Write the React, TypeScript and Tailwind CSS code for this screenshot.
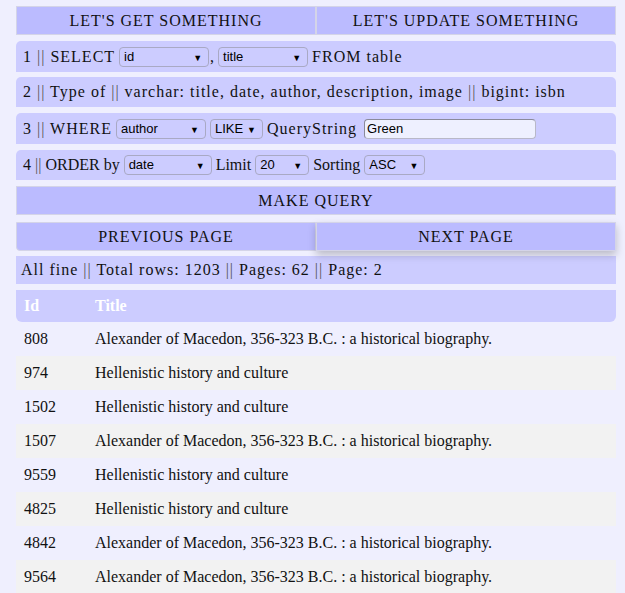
import React from "react";

const serif = "font-['Liberation_Serif','Times_New_Roman',serif]";
const sans = "font-['Liberation_Sans',Arial,sans-serif]";

const rows = [
    { id: 808, title: "Alexander of Macedon, 356-323 B.C. : a historical biography." },
    { id: 974, title: "Hellenistic history and culture" },
    { id: 1502, title: "Hellenistic history and culture" },
    { id: 1507, title: "Alexander of Macedon, 356-323 B.C. : a historical biography." },
    { id: 9559, title: "Hellenistic history and culture" },
    { id: 4825, title: "Hellenistic history and culture" },
    { id: 4842, title: "Alexander of Macedon, 356-323 B.C. : a historical biography." },
    { id: 9564, title: "Alexander of Macedon, 356-323 B.C. : a historical biography." },
];

// the pipes render thin and greyish in the original
const Sep = () => <span className="text-[#555]">||</span>;

const Select = ( { value, width }: { value: string; width: string } ) => (
    <span className={ `relative inline-flex items-center h-[20px] ${width} rounded-[4px] border border-[#a9a9c4] ${sans} text-[13px] tracking-normal text-black` }>
        <span className="pl-[4px]">{ value }</span>
        <span className="absolute right-[6px] top-[3px] text-[9px] leading-[14px]">▼</span>
    </span>
);

const Button = ( { label, extra = "" }: { label: string; extra?: string } ) => (
    <button className={ `flex-1 h-full bg-[#bbbbff] border border-[#d4d4e8] text-[16px] tracking-[1px] text-[#111] ${serif} ${extra}` }>
        { label }
    </button>
);

const Row = ( { children, h = "h-[30px]", extra = "" }: { children: React.ReactNode; h?: string; extra?: string } ) => (
    <div className={ `flex items-center gap-[4px] ${h} px-[7px] bg-[#ccccff] rounded-t-[5px] text-[16px] text-[#111] ${serif} ${extra}` }>
        { children }
    </div>
);

export default function App () {
    return (
        <div className="min-h-[593px] bg-[#efeffe] pt-[6px]">
            <div className="w-[600px] ml-[16px] flex flex-col">
                <div className="flex h-[29px]">
                    <Button label="LET'S GET SOMETHING" />
                    <Button label="LET'S UPDATE SOMETHING" />
                </div>

                <Row h="h-[31px]" extra="mt-[6px] tracking-[1px]">
                    <span>1 <Sep /> SELECT</span>
                    <Select value="id" width="w-[90px]" />
                    <span className="-ml-[3px] -mr-[1px]">,</span>
                    <Select value="title" width="w-[90px]" />
                    <span>FROM table</span>
                </Row>

                <Row extra="mt-[5px] tracking-[1px]">
                    <span>2 <Sep /> Type of <Sep /> varchar: title, date, author, description, image <Sep /> bigint: isbn</span>
                </Row>

                <Row h="h-[31px]" extra="mt-[6px] tracking-[1px]">
                    <span>3 <Sep /> WHERE</span>
                    <Select value="author" width="w-[90px]" />
                    <Select value="LIKE" width="w-[53px]" />
                    <span>QueryString</span>
                    <input
                        defaultValue="Green"
                        className={ `ml-[3px] h-[20px] w-[172px] rounded-[4px] bg-[#eef0ff] border border-[#b8b8c8] border-t-[#8a8a9a] border-l-[#8a8a9a] px-[2px] ${sans} text-[13px] tracking-normal text-black outline-none` }
                    />
                </Row>

                <Row extra="mt-[6px]">
                    <span>4 <Sep /> ORDER by</span>
                    <Select value="date" width="w-[88px]" />
                    <span>Limit</span>
                    <Select value="20" width="w-[54px]" />
                    <span>Sorting</span>
                    <Select value="ASC" width="w-[61px]" />
                </Row>

                <div className="flex h-[29px] mt-[6px]">
                    <Button label="MAKE QUERY" />
                </div>

                <div className="flex h-[29px] mt-[7px]">
                    <Button label="PREVIOUS PAGE" extra="rounded-bl-[4px]" />
                    <Button label="NEXT PAGE" extra="shadow-[0_4px_8px_rgba(0,0,0,0.22)] relative" />
                </div>

                <div className={ `flex items-center h-[28px] mt-[5px] px-[5px] bg-[#ccccff] text-[16px] tracking-[1px] text-[#111] ${serif}` }>
                    <span>All fine <Sep /> Total rows: 1203 <Sep /> Pages: 62 <Sep /> Page: 2</span>
                </div>

                <div className={ `flex items-center h-[32px] mt-[6px] bg-[#ccccff] rounded-b-[6px] text-white font-bold text-[16px] ${serif}` }>
                    <span className="w-[79px] pl-[8px]">Id</span>
                    <span>Title</span>
                </div>

                <div className={ `flex flex-col text-[16px] text-[#111] ${serif}` }>
                    { rows.map( ( row, i ) => (
                        <div key={ row.id } className={ `flex items-center h-[34px] ${i % 2 === 1 ? "bg-[#f2f2f2]" : ""}` }>
                            <span className="w-[79px] pl-[8px]">{ row.id }</span>
                            <span>{ row.title }</span>
                        </div>
                    ) ) }
                </div>
            </div>
        </div>
    );
}
